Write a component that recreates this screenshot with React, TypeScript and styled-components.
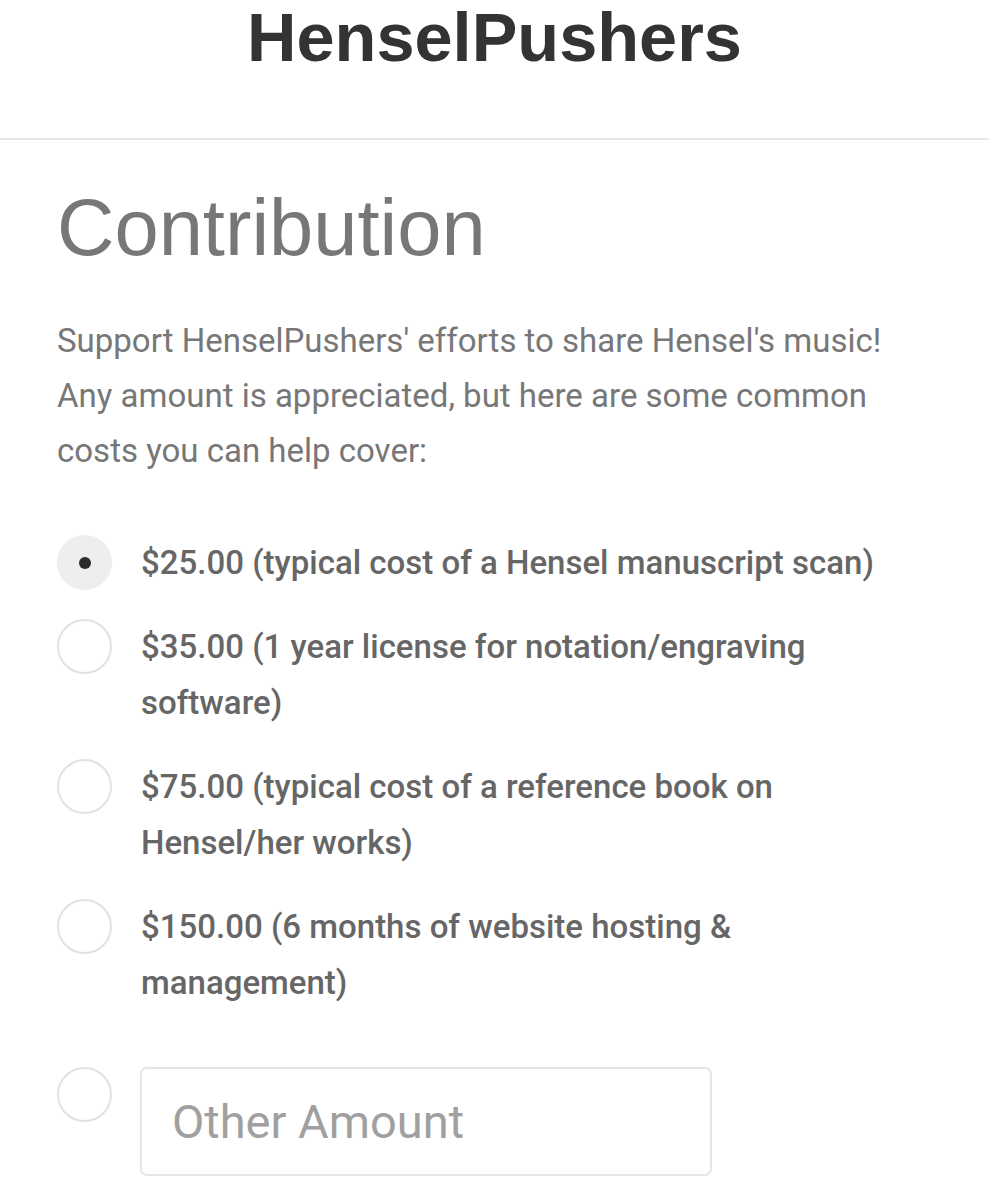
import React, { useState } from "react";
import styled, { createGlobalStyle } from "styled-components";

const GlobalStyle = createGlobalStyle`
  html, body {
    margin: 0;
    padding: 0;
    background: #ffffff;
  }
  body {
    font-family: "Liberation Sans", Arial, sans-serif;
  }
`;

const Page = styled.div`
  width: 989px;
`;

const Header = styled.header`
  height: 140px;
  padding-top: 4px;
  box-sizing: border-box;
  border-bottom: 2px solid #e6e6e6;
  display: flex;
  justify-content: center;
`;

const SiteTitle = styled.h1`
  margin: 0;
  font-family: "Liberation Sans", Arial, sans-serif;
  font-weight: 700;
  font-size: 68.5px;
  line-height: 68px;
  color: #333333;
`;

const Content = styled.main`
  padding: 48px 40px 0 57px;
`;

const Heading = styled.h2`
  margin: 0;
  font-family: "Liberation Sans", Arial, sans-serif;
  font-weight: 400;
  font-size: 79.5px;
  line-height: 79px;
  color: #777777;
`;

const Intro = styled.p`
  margin: 46px 0 0;
  max-width: 860px;
  font-family: Roboto, "Liberation Sans", sans-serif;
  font-size: 33px;
  line-height: 55px;
  color: #777777;
`;

const Options = styled.div`
  margin-top: 57px;
  display: flex;
  flex-direction: column;
  gap: 28px;
`;

const OptionRow = styled.label`
  display: flex;
  align-items: flex-start;
  gap: 29px;
  cursor: pointer;
`;

const Radio = styled.span<{ checked: boolean }>`
  flex: none;
  width: 55px;
  height: 55px;
  border-radius: 50%;
  box-sizing: border-box;
  border: ${({ checked }) => (checked ? "none" : "2px solid #e2e2e2")};
  background: ${({ checked }) => (checked ? "#eeeeee" : "#ffffff")};
  display: flex;
  align-items: center;
  justify-content: center;

  &::after {
    content: "";
    display: ${({ checked }) => (checked ? "block" : "none")};
    width: 12px;
    height: 12px;
    border-radius: 50%;
    background: #2b2b2b;
  }
`;

const OptionLabel = styled.span`
  max-width: 745px;
  font-family: Roboto, "Liberation Sans", sans-serif;
  font-weight: 500;
  font-size: 33px;
  line-height: 56px;
  color: #666666;
`;

const OtherRow = styled.div`
  margin-top: 56px;
  display: flex;
  align-items: flex-start;
  gap: 28px;
`;

const AmountInput = styled.input`
  width: 572px;
  height: 109px;
  box-sizing: border-box;
  border: 2px solid #e6e6e6;
  border-radius: 7px;
  padding: 0 30px;
  font-family: Roboto, "Liberation Sans", sans-serif;
  font-size: 47px;
  color: #555555;
  outline: none;

  &::placeholder {
    color: #a0a0a0;
  }
`;

const amounts = [
  "$25.00 (typical cost of a Hensel manuscript scan)",
  "$35.00 (1 year license for notation/engraving software)",
  "$75.00 (typical cost of a reference book on Hensel/her works)",
  "$150.00 (6 months of website hosting & management)",
];

export default function App() {
  const [selected, setSelected] = useState(0);

  return (
    <Page>
      <GlobalStyle />
      <Header>
        <SiteTitle>HenselPushers</SiteTitle>
      </Header>
      <Content>
        <Heading>Contribution</Heading>
        <Intro>
          Support HenselPushers' efforts to share Hensel's music! Any amount is
          appreciated, but here are some common costs you can help cover:
        </Intro>
        <Options>
          {amounts.map((text, i) => (
            <OptionRow key={text} onClick={() => setSelected(i)}>
              <Radio checked={selected === i} />
              <OptionLabel>{text}</OptionLabel>
            </OptionRow>
          ))}
        </Options>
        <OtherRow onClick={() => setSelected(amounts.length)}>
          <Radio checked={selected === amounts.length} />
          <AmountInput placeholder="Other Amount" />
        </OtherRow>
      </Content>
    </Page>
  );
}
